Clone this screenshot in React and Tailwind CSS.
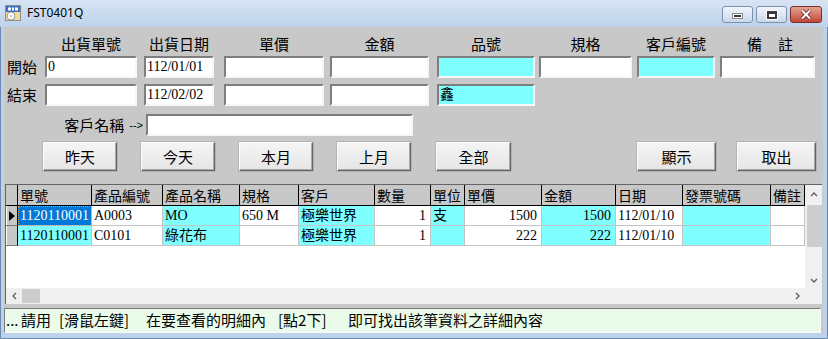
import React from "react";

const cjk = "font-['Noto_Sans_CJK_TC','Noto_Sans_CJK_SC',sans-serif]";
const serif = "font-['Liberation_Serif','Noto_Sans_CJK_TC',serif]";

const formCols = [
  { w: "w-[92px]", ml: "ml-0", label: "出貨單號" },
  { w: "w-[70px]", ml: "ml-[7px]", label: "出貨日期" },
  { w: "w-[100px]", ml: "ml-[10px]", label: "單價" },
  { w: "w-[99px]", ml: "ml-[6px]", label: "金額" },
  { w: "w-[98px]", ml: "ml-[8px]", label: "品號", cyan: true },
  { w: "w-[93px]", ml: "ml-[4px]", label: "規格" },
  { w: "w-[78px]", ml: "ml-[5px]", label: "客戶編號", cyan: true },
  { w: "w-[95px]", ml: "ml-[5px]", label: "備註" },
];

const startVals = ["0", "112/01/01", "", "", "", "", "", ""];
const endVals = ["", "112/02/02", "", "", "鑫"];

const gridCols = [
  { h: "單號", w: "w-[74px]" },
  { h: "產品編號", w: "w-[71px]" },
  { h: "產品名稱", w: "w-[77px]" },
  { h: "規格", w: "w-[59px]" },
  { h: "客戶", w: "w-[76px]" },
  { h: "數量", w: "w-[56px]", right: true },
  { h: "單位", w: "w-[34px]" },
  { h: "單價", w: "w-[77px]", right: true },
  { h: "金額", w: "w-[74px]", right: true },
  { h: "日期", w: "w-[67px]" },
  { h: "發票號碼", w: "w-[88px]" },
  { h: "備註", w: "w-[34px]" },
];

const cyanCols = [2, 4, 6, 8, 10];

const rows = [
  ["1120110001", "A0003", "MO", "650 M", "極樂世界", "1", "支", "1500", "1500", "112/01/10", "", ""],
  ["1120110001", "C0101", "綠花布", "", "極樂世界", "1", "", "222", "222", "112/01/10", "", ""],
];

const buttons = [
  { ml: "ml-[39px]", w: "w-[74px]", t: "昨天" },
  { ml: "ml-[24px]", w: "w-[74px]", t: "今天" },
  { ml: "ml-[24px]", w: "w-[74px]", t: "本月" },
  { ml: "ml-[24px]", w: "w-[74px]", t: "上月" },
  { ml: "ml-[25px]", w: "w-[75px]", t: "全部" },
  { ml: "ml-[126px]", w: "w-[79px]", t: "顯示" },
  { ml: "ml-[21px]", w: "w-[79px]", t: "取出" },
];

const hint = [
  { w: "w-[15px]", t: "..." },
  { w: "w-[38px]", t: "請用" },
  { w: "w-[87px]", t: "[滑鼠左鍵]" },
  { w: "w-[132px]", t: "在要查看的明細內" },
  { w: "w-[70px]", t: "[點2下]" },
  { w: "w-[200px]", t: "即可找出該筆資料之詳細內容" },
];

function Field({ w, ml, value, cyan }) {
  return (
    <div
      className={`${w} ${ml} h-[22px] border-2 border-t-[#7e7e7e] border-l-[#7e7e7e] border-b-[#f6f6f6] border-r-[#f6f6f6] ${
        cyan ? "bg-[#80ffff]" : "bg-white"
      } pl-[1px] text-[14px] leading-[18px] text-black whitespace-nowrap overflow-hidden ${serif}`}
    >
      {value}
    </div>
  );
}

function Chevron({ dir }) {
  const pts = {
    up: "2,7 5,4 8,7",
    down: "2,4 5,7 8,4",
    left: "7,2 4,5 7,8",
    right: "4,2 7,5 4,8",
  }[dir];
  return (
    <svg width="10" height="10" viewBox="0 0 10 10">
      <polyline points={pts} fill="none" stroke="#606060" strokeWidth="1.4" />
    </svg>
  );
}

function AppIcon() {
  return (
    <svg width="16" height="16" viewBox="0 0 16 16">
      <rect x="0.5" y="0.5" width="15" height="15" fill="#f2dc96" stroke="#8d8d8d" />
      <rect x="1" y="1" width="14" height="6" fill="#3c6fc8" />
      <rect x="3" y="2.5" width="3" height="3" fill="#ffffff" />
      <rect x="7" y="2.5" width="2" height="3" fill="#ffffff" />
      <rect x="10" y="2.5" width="3" height="3" fill="#ffffff" />
      <circle cx="6" cy="11" r="4" fill="#ffffff" stroke="#9a9a9a" />
      <circle cx="6" cy="11" r="1.2" fill="#c9c9c9" />
    </svg>
  );
}

export default function App() {
  return (
    <div className="w-[828px] h-[339px] bg-[#bcd2eb] shadow-[inset_0_0_0_1px_#6f88ad] flex flex-col overflow-hidden">
      {/* title bar */}
      <div className="h-[27px] flex items-start bg-gradient-to-b from-[#d6e4f4] to-[#bdd2ea]">
        <div className="ml-[5px] mt-[5px]">
          <AppIcon />
        </div>
        <div className="ml-[6px] mt-[5px] text-[12px] leading-[16px] text-black font-['Noto_Sans','Liberation_Sans',sans-serif]">
          FST0401Q
        </div>
        <div className="ml-auto mr-[6px] mt-[6px] flex gap-[3px]">
          <div className="w-[31px] h-[17px] rounded-[3px] border border-[#7d91ad] bg-gradient-to-b from-[#f1f5fb] to-[#cad8ec] flex items-end justify-center pb-[4px]">
            <div className="w-[9px] h-[4px] bg-[#3a3a3a] border border-white shadow-[0_0_0_1px_#8a8a8a]" />
          </div>
          <div className="w-[31px] h-[17px] rounded-[3px] border border-[#7d91ad] bg-gradient-to-b from-[#f1f5fb] to-[#cad8ec] flex items-center justify-center">
            <div className="w-[10px] h-[8px] border-2 border-t-[3px] border-[#3a3a3a] bg-white shadow-[0_0_0_1px_#ffffff]" />
          </div>
          <div className="w-[32px] h-[17px] rounded-[3px] border border-[#7a3026] bg-gradient-to-b from-[#e3a493] to-[#c2453a] flex items-center justify-center">
            <svg width="12" height="11" viewBox="0 0 12 11">
              <path d="M2 1.5 L10 9.5 M10 1.5 L2 9.5" stroke="#5b1e16" strokeWidth="3.6" />
              <path d="M2 1.5 L10 9.5 M10 1.5 L2 9.5" stroke="#ffffff" strokeWidth="2" />
            </svg>
          </div>
        </div>
      </div>

      {/* client area */}
      <div className="ml-[4px] mr-[5px] h-[306px] bg-[#c8c8c8] flex flex-col">
        {/* column labels */}
        <div className={`h-[29px] flex pt-[7px] text-[15px] leading-[20px] text-black ${cjk}`}>
          <div className="w-[41px]" />
          {formCols.map((c, i) =>
            c.label === "備註" ? (
              <div key={i} className={`${c.w} ${c.ml} flex gap-[16px] pl-[27px]`}>
                <span>備</span>
                <span>註</span>
              </div>
            ) : (
              <div key={i} className={`${c.w} ${c.ml} text-center whitespace-nowrap`}>
                {c.label}
              </div>
            )
          )}
        </div>

        {/* start row */}
        <div className="flex items-center">
          <div className={`w-[41px] pl-[3px] text-[15px] leading-[22px] ${cjk}`}>開始</div>
          {formCols.map((c, i) => (
            <Field key={i} w={c.w} ml={c.ml} value={startVals[i]} cyan={c.cyan} />
          ))}
        </div>

        {/* end row */}
        <div className="flex items-center mt-[6px]">
          <div className={`w-[41px] pl-[3px] text-[15px] leading-[22px] ${cjk}`}>結束</div>
          {formCols.slice(0, 5).map((c, i) => (
            <Field key={i} w={c.w} ml={c.ml} value={endVals[i]} cyan={c.cyan} />
          ))}
        </div>

        {/* customer name */}
        <div className="flex items-center mt-[8px]">
          <div className={`w-[142px] pr-[3px] flex items-center justify-end text-[15px] leading-[22px] ${cjk}`}>
            客戶名稱
            <span className="ml-[5px] text-[11px] font-['Liberation_Sans',sans-serif]">--&gt;</span>
          </div>
          <Field w="w-[267px]" ml="ml-0" value="" />
        </div>

        {/* buttons */}
        <div className="flex mt-[6px]">
          {buttons.map((b, i) => (
            <button
              key={i}
              className={`${b.ml} ${b.w} h-[29px] bg-gradient-to-b from-[#f4f4f4] to-[#e6e6e6] border border-t-[#fdfdfd] border-l-[#fdfdfd] border-b-[#646464] border-r-[#646464] shadow-[inset_-1px_-1px_0_#a9a9a9,0_0_0_1px_#b4b4b4] text-[15px] leading-none text-black ${cjk}`}
            >
              {b.t}
            </button>
          ))}
        </div>

        {/* data grid */}
        <div className="ml-[1px] mt-[13px] w-[817px] h-[120px] flex flex-col border-t border-l border-[#646464]">
          <div className="h-[103px] flex">
            <div className="w-[799px] bg-white flex flex-col">
              {/* header */}
              <div className={`flex h-[21px] text-[14px] leading-[20px] text-black ${cjk}`}>
                <div className="w-[12px] bg-[#c8c8c8] border-r border-b border-black" />
                {gridCols.map((c, i) => (
                  <div
                    key={i}
                    className={`${c.w} bg-[#c8c8c8] border-r border-b border-black pl-[2px] whitespace-nowrap overflow-hidden`}
                  >
                    {c.h}
                  </div>
                ))}
              </div>
              {/* rows */}
              {rows.map((r, ri) => (
                <div key={ri} className={`flex h-[20px] text-[14px] leading-[19px] text-black ${serif}`}>
                  <div className="w-[12px] bg-[#c8c8c8] border-r border-b border-r-black border-b-[#7a7a7a] shadow-[inset_1px_0_0_#ffffff] flex items-center justify-center">
                    {ri === 0 && (
                      <svg width="6" height="10" viewBox="0 0 6 10">
                        <polygon points="0,0 6,5 0,10" fill="#000" />
                      </svg>
                    )}
                  </div>
                  {gridCols.map((c, ci) => {
                    const selected = ri === 0 && ci === 0;
                    const cyan = cyanCols.includes(ci) || (ci === 0 && ri === 1);
                    const bg = selected ? "bg-[#0078d7] text-white" : cyan ? "bg-[#80ffff]" : "bg-white";
                    return (
                      <div
                        key={ci}
                        className={`${c.w} ${bg} border-r border-b border-[#c4c4c4] whitespace-nowrap overflow-hidden ${
                          c.right ? "text-right pr-[4px]" : "pl-[2px]"
                        } ${selected ? "outline-1 outline-dotted outline-[#e8a040] -outline-offset-1" : ""}`}
                      >
                        {r[ci]}
                      </div>
                    );
                  })}
                </div>
              ))}
            </div>
            {/* vertical scrollbar */}
            <div className="w-[17px] bg-[#f0f0f0] flex flex-col">
              <div className="h-[17px] flex items-center justify-center">
                <Chevron dir="up" />
              </div>
              <div className="mt-[3px] ml-[2px] h-[42px] bg-[#cdcdcd]" />
              <div className="flex-1" />
              <div className="h-[17px] flex items-center justify-center">
                <Chevron dir="down" />
              </div>
            </div>
          </div>
          {/* horizontal scrollbar */}
          <div className="h-[16px] flex bg-[#f0f0f0]">
            <div className="w-[16px] flex items-center justify-center">
              <Chevron dir="left" />
            </div>
            <div className="w-[18px] my-[1px] bg-[#cdcdcd]" />
            <div className="flex-1" />
            <div className="w-[17px] flex items-center justify-center">
              <Chevron dir="right" />
            </div>
            <div className="w-[17px] bg-[#f0f0f0]" />
          </div>
        </div>

        {/* status bar */}
        <div
          className={`mt-[4px] w-[817px] h-[25px] bg-[#ebfbea] border border-t-[#7a7a7a] border-l-[#7a7a7a] border-b-[#fafafa] border-r-[#fafafa] pl-[1px] flex text-[15px] leading-[22px] text-black whitespace-nowrap ${cjk}`}
        >
          {hint.map((h, i) => (
            <span key={i} className={`${h.w} shrink-0`}>
              {h.t}
            </span>
          ))}
        </div>
      </div>
    </div>
  );
}
